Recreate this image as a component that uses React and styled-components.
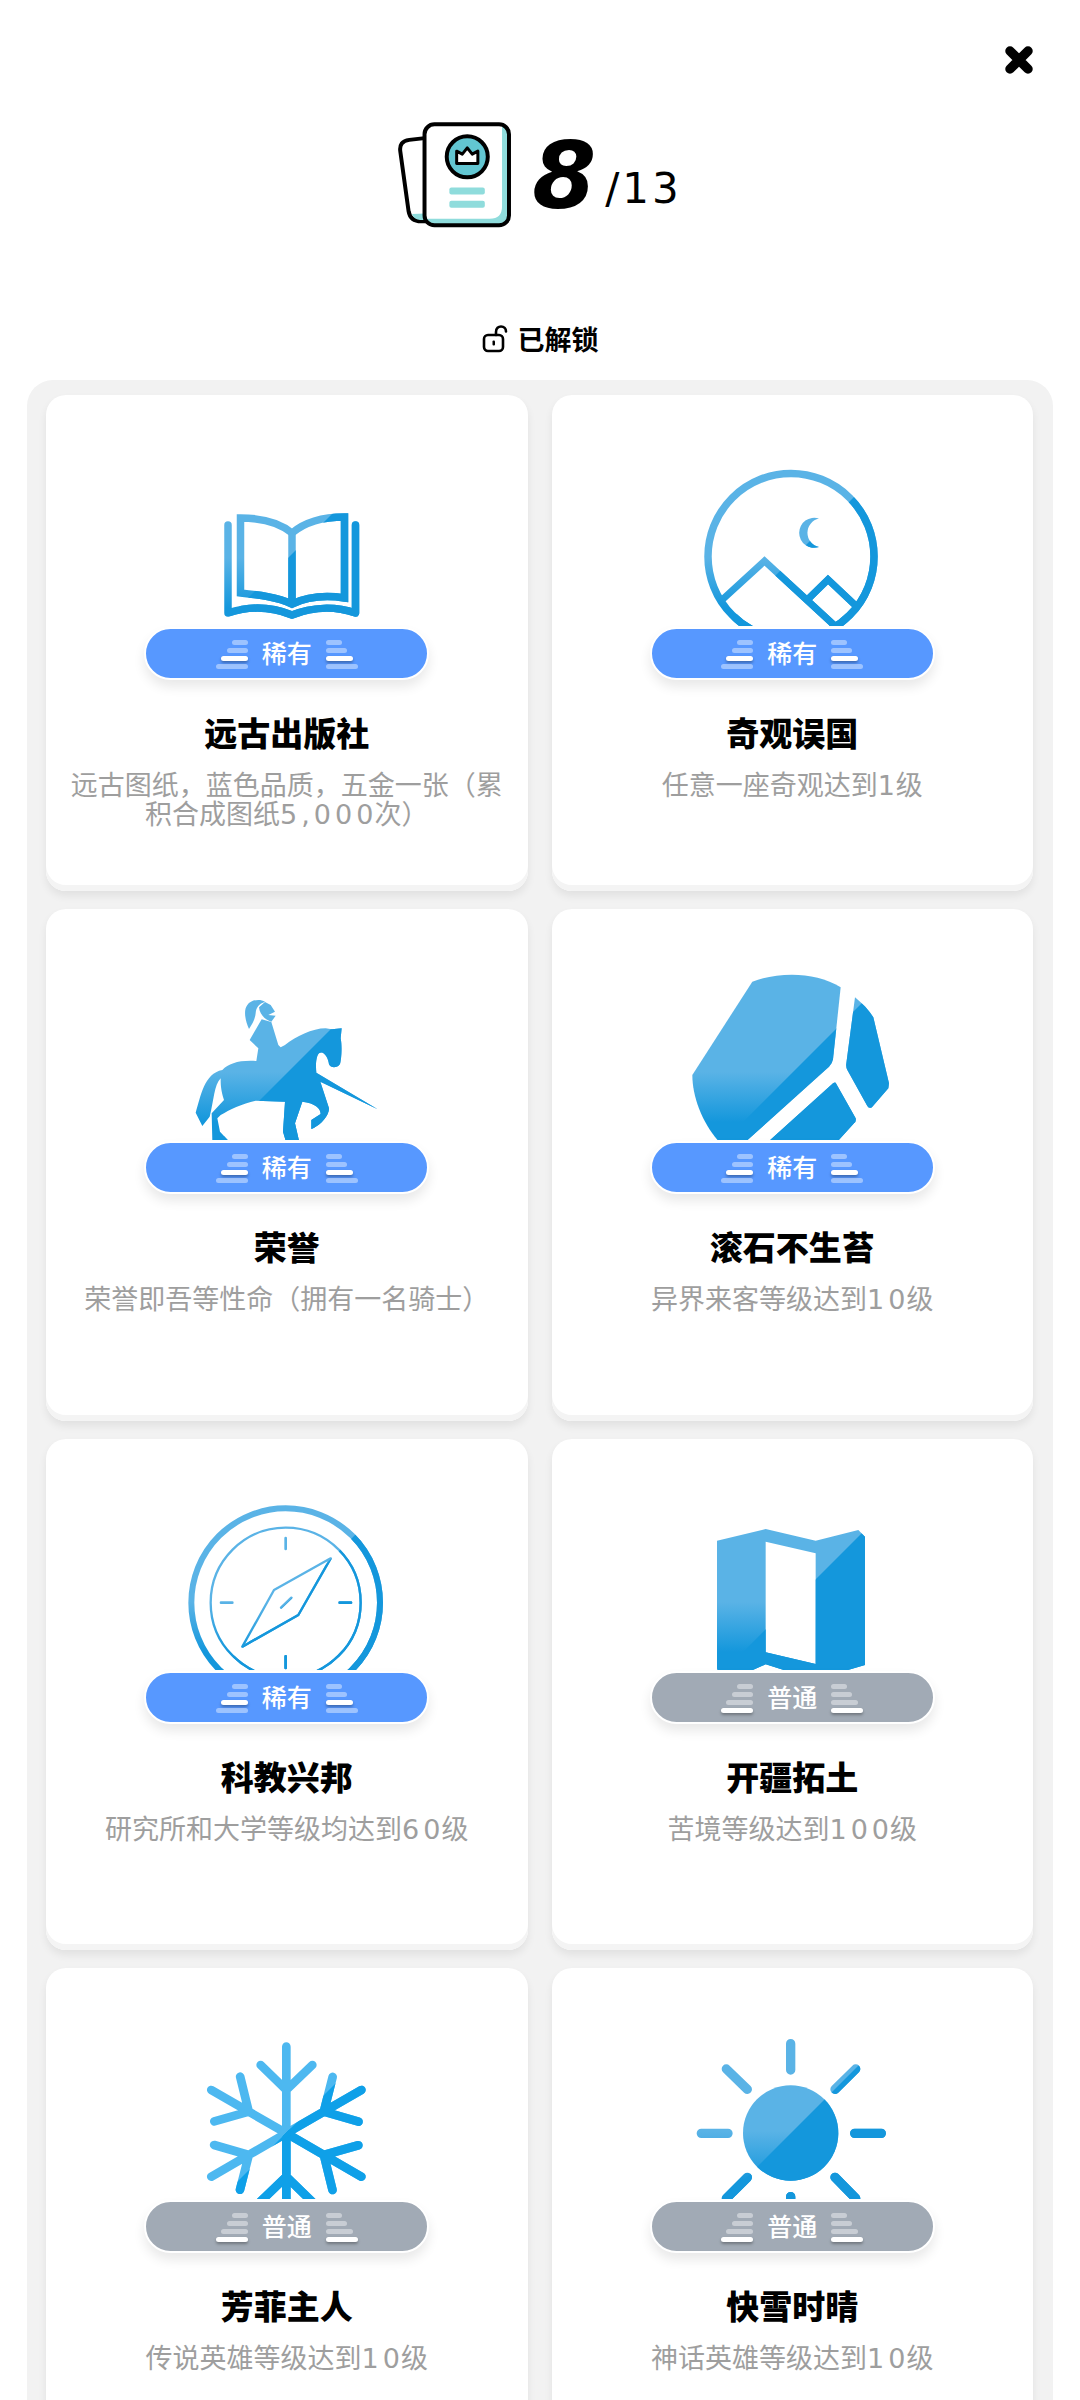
import React from "react";
import styled, { createGlobalStyle } from "styled-components";

const Global = createGlobalStyle`
  html, body { margin: 0; padding: 0; background: #fff; }
  body { font-family: "Noto Sans CJK SC", "Noto Sans", sans-serif; }
`;

const Page = styled.div`
  width: 1080px;
  height: 2400px;
  overflow: hidden;
  background: #fff;
`;
const CloseRow = styled.div`
  display: flex;
  justify-content: flex-end;
  padding: 46px 47px 0 0;
`;
const CountRow = styled.div`
  display: flex;
  justify-content: center;
  align-items: flex-start;
  height: 106px;
  margin-top: 48px;
`;
const CountBig = styled.span`
  font-family: "DejaVu Sans", sans-serif;
  font-weight: 700;
  font-style: italic;
  font-size: 92px;
  line-height: 106px;
  color: #000;
  margin-left: 20px;
  margin-top: 2px;
  width: 66px;
`;
const CountTotal = styled.span`
  font-family: "DejaVu Sans", sans-serif;
  font-size: 42px;
  line-height: 42px;
  letter-spacing: 3px;
  color: #000;
  margin-top: 46px;
  margin-left: 7px;
`;
const UnlockRow = styled.div`
  display: flex;
  justify-content: center;
  align-items: center;
  gap: 10px;
  height: 30px;
  margin-top: 96px;
`;
const UnlockText = styled.span`
  font-size: 27px;
  font-weight: 700;
  line-height: 30px;
  color: #000;
`;
const Panel = styled.section`
  margin: 26px 27px 0;
  padding: 15px 20px 40px 19px;
  background: #f2f2f2;
  border-radius: 26px 26px 0 0;
`;
const Grid = styled.div`
  display: grid;
  grid-template-columns: 1fr 1fr;
  gap: 18px 24px;
`;
const Card = styled.article`
  height: ${(p) => p.$h}px;
  box-sizing: border-box;
  padding-top: 63px;
  display: flex;
  flex-direction: column;
  align-items: center;
  background: #fff;
  border-radius: 20px;
  box-shadow: inset 0 -6px 0 #f4f4f4, 0 5px 9px rgba(0, 0, 0, 0.07);
`;
const IconClip = styled.div`
  width: 200px;
  height: 168px;
  overflow: hidden;
  flex: none;
`;
const IconSvg = styled.svg`
  display: block;
  width: 200px;
  height: 200px;
`;
const Badge = styled.div`
  flex: none;
  box-sizing: border-box;
  width: 285px;
  height: 53px;
  margin-top: 1px;
  display: flex;
  justify-content: center;
  align-items: center;
  gap: 14px;
  border: 2px solid #fff;
  border-radius: 27px;
  background: ${(p) => (p.$rare ? "#5798ff" : "#a1aab5")};
  box-shadow: 0 7px 12px rgba(0, 0, 0, 0.09);
`;
const BadgeLabel = styled.span`
  font-size: 25px;
  font-weight: 500;
  line-height: 1;
  color: #fff;
  margin-top: -3px;
`;
const Stack = styled.div`
  width: 32px;
  display: flex;
  flex-direction: column;
  gap: 3px;
  margin-top: 2px;
  align-items: ${(p) => (p.$right ? "flex-start" : "flex-end")};
`;
const Bar = styled.i`
  display: block;
  height: 5px;
  width: ${(p) => p.$w}px;
  border-radius: 3px;
  background: ${(p) => (p.$on ? "#fff" : "rgba(255,255,255,0.42)")};
  box-shadow: ${(p) => (p.$on ? "0 2px 3px rgba(0,0,0,0.3)" : "none")};
`;
const Title = styled.h3`
  margin: 32px 0 0;
  font-size: 33px;
  font-weight: 900;
  line-height: 40px;
  color: #000;
`;
const Desc = styled.p`
  margin: 17px 0 0;
  width: 436px;
  font-size: 27px;
  line-height: 29px;
  font-weight: 400;
  text-align: center;
  color: #9e9e9e;
`;
const Num = styled.span`
  font-family: "DejaVu Sans", sans-serif;
  letter-spacing: 4px;
  margin-right: -3px;
`;

const Gloss = ({ id, s = 3, dx = 0, dy = 0, light = "#5ab3e6", dark = "#1497dc", draw }) => {
  const sum = s * (201 + dx + dy);
  const far = 100000;
  return (
    <IconSvg viewBox={`${dx * s} ${dy * s} ${200 * s} ${200 * s}`}>
      <defs>
        <linearGradient id={`g-${id}`} gradientUnits="userSpaceOnUse" x1="0" x2="0" y1={(100 + dy) * s} y2={(150 + dy) * s}>
          <stop offset="0" stopColor={light} />
          <stop offset="1" stopColor={dark} />
        </linearGradient>
        <clipPath id={`c-${id}`}>
          <polygon points={`${sum + far},${-far} ${sum + far},${far} ${sum - far},${far}`} />
        </clipPath>
      </defs>
      <g>{draw(`url(#g-${id})`)}</g>
      <g clipPath={`url(#c-${id})`}>{draw(dark)}</g>
    </IconSvg>
  );
};

const BookIcon = () => (
  <Gloss
    id="book"
    s={1}
    draw={(p) => (
      <g fill="none" stroke={p} strokeWidth="7.5">
        <path d="M53.5 60 C72 60 92 64 105 75 C118 64 138 59 157.5 59 V140 C138 137 120 139 105 146 C90 139 72 137 53.5 135 Z" />
        <path d="M105 75 V146" />
        <path strokeLinecap="round" strokeLinejoin="round" d="M41 67 V155 C62 148 85 149 105 157 C125 149 148 148 168.5 155 V67" />
      </g>
    )}
  />
);

const SceneIcon = () => (
  <Gloss
    id="scene"
    s={1}
    draw={(p) => (
      <g>
        <circle cx="99" cy="98.5" r="83" fill="none" stroke={p} strokeWidth="7.5" />
        <path fill={p} d="M127 60.6 A15 15 0 1 0 127 89 A14.5 14.5 0 0 1 127 60.6 Z" />
        <path fill="none" stroke={p} strokeWidth="7" d="M31 141 L72.5 103 L142 167 M115.4 141.7 L136 121.5 L163 147" />
      </g>
    )}
  />
);

const KnightIcon = () => (
  <Gloss
    id="knight"
    dx={48}
    dy={12}
    draw={(p) => (
      <g fill={p}>
        <path d="M330 207 C318 180 313 150 325 135 C335 120 362 115 378 125 C360 132 352 140 350 160 C348 178 340 192 330 207 Z" />
        <path d="M360 142 L378 126 L395 135 L408 155 L388 165 L410 167 L397 185 C380 180 362 165 360 142 Z" />
        <path d="M368 178 L397 186 L418 255 L425 262 L438 255 C470 230 520 205 560 205 L578 208 L608 205 L605 235 C610 260 607 300 603 312 C595 325 575 325 570 313 C568 295 555 270 540 280 C530 290 530 320 532 338 L716 448 L544 365 L570 445 C570 470 540 500 517 507 L517 480 L545 462 C545 445 530 430 490 425 L468 490 L480 542 L440 542 L432 515 L438 425 L350 422 C310 430 270 450 245 465 L235 475 L243 515 L268 542 L220 542 L218 460 L255 420 C245 390 245 370 245 355 C225 375 225 420 212 470 L190 498 L170 458 C185 410 195 340 250 330 C270 310 300 300 352 303 L358 265 L332 240 L368 178 Z" />
      </g>
    )}
  />
);

const RockIcon = () => (
  <Gloss
    id="rock"
    dx={53}
    dy={12}
    draw={(p) => (
      <g fill={p}>
        <path d="M340 65 C420 35 530 35 605 82 L582 298 Q580 310 570 320 L320 545 L240 545 C190 490 160 410 160 345 Z" />
        <path d="M648 112 C670 130 690 150 703 172 L750 370 L748 385 L700 440 Q692 448 685 438 L625 330 Q620 320 622 310 Z" />
        <path d="M590 368 L650 475 Q652 485 645 490 L595 545 L388 545 L582 370 Q587 366 590 368 Z" />
      </g>
    )}
  />
);

const CompassIcon = () => (
  <Gloss
    id="compass"
    dx={48}
    dy={12}
    draw={(p) => (
      <g fill="none" stroke={p}>
        <circle cx="440" cy="338" r="283" strokeWidth="18" />
        <circle cx="440" cy="338" r="225" strokeWidth="7" />
        <path strokeWidth="8" strokeLinecap="round" d="M440 144 V177 M440 499 V534 M246 338 H280 M602 338 H636" />
        <path strokeWidth="7" strokeLinejoin="round" d="M575 205 L405 300 L310 470 L478 375 Z" />
        <path strokeWidth="7" strokeLinecap="round" d="M426 353 L457 323" />
      </g>
    )}
  />
);

const MapIcon = () => (
  <Gloss
    id="map"
    dx={53}
    dy={12}
    draw={(p) => (
      <path
        fill={p}
        fillRule="evenodd"
        d="M234 152 L380 117 L530 152 L658 120 L678 140 V525 L610 545 L450 545 L380 523 L330 545 L240 545 Q234 541 234 535 Z M380 155 L530 190 V522 L380 487 Z"
      />
    )}
  />
);

const arms = [0, 60, 120, 180, 240, 300];
const SnowIcon = () => (
  <Gloss
    id="snow"
    dx={48}
    dy={11}
    light="#4db8f0"
    dark="#0fa0e8"
    draw={(p) => (
      <g fill="none" stroke={p} strokeWidth="26" strokeLinecap="round" strokeLinejoin="round">
        {arms.map((a) => (
          <path key={a} transform={`rotate(${a} 442 340)`} d="M442 340 V80 M365 135 L442 210 L520 135" />
        ))}
      </g>
    )}
  />
);

const SunIcon = () => (
  <Gloss
    id="sun"
    dx={53}
    dy={11}
    draw={(p) => (
      <g fill="none" stroke={p}>
        <circle cx="455" cy="339" r="143" fill={p} stroke="none" />
        <path
          strokeWidth="28"
          strokeLinecap="round"
          d="M455 71 V150 M455 530 V609 M187 340 H267 M647 340 H727 M262 147 L325 208 M650 147 L588 208 M325 472 L262 535 M588 472 L650 535"
        />
      </g>
    )}
  />
);

const barWidths = [16, 21, 27, 32];
const Bars = ({ right, on }) => (
  <Stack $right={right}>
    {barWidths.map((w, i) => (
      <Bar key={w} $w={w} $on={i === on} />
    ))}
  </Stack>
);

const withDigits = (text) =>
  text.split(/(\d[\d,]*)/).map((part, i) => (i % 2 ? <Num key={i}>{part}</Num> : part));

const items = [
  { Icon: BookIcon, rare: true, title: "远古出版社", desc: "远古图纸，蓝色品质，五金一张（累积合成图纸5,000次）", h: 496 },
  { Icon: SceneIcon, rare: true, title: "奇观误国", desc: "任意一座奇观达到1级", h: 496 },
  { Icon: KnightIcon, rare: true, title: "荣誉", desc: "荣誉即吾等性命（拥有一名骑士）", h: 512 },
  { Icon: RockIcon, rare: true, title: "滚石不生苔", desc: "异界来客等级达到10级", h: 512 },
  { Icon: CompassIcon, rare: true, title: "科教兴邦", desc: "研究所和大学等级均达到60级", h: 511 },
  { Icon: MapIcon, rare: false, title: "开疆拓土", desc: "苦境等级达到100级", h: 511 },
  { Icon: SnowIcon, rare: false, title: "芳菲主人", desc: "传说英雄等级达到10级", h: 511 },
  { Icon: SunIcon, rare: false, title: "快雪时晴", desc: "神话英雄等级达到10级", h: 511 },
];

const CloseIcon = () => (
  <svg width="28" height="28" viewBox="0 0 28 28">
    <path d="M5 5 L23 23 M23 5 L5 23" stroke="#000" strokeWidth="9.5" strokeLinecap="round" />
  </svg>
);

const AlbumIcon = () => (
  <svg width="114" height="106" viewBox="118 120 344 320">
    <path d="M205 168 L152 174 Q120 178 125 210 L150 390 Q155 420 188 420 L215 420 Z" fill="#fff" stroke="#000" strokeWidth="12" strokeLinejoin="round" />
    <path d="M160 398 L200 396 L200 416 L185 416 Q168 416 160 398 Z" fill="#8fdcdc" />
    <rect x="198" y="127" width="255" height="305" rx="30" fill="#fff" />
    <path d="M432 130 Q450 135 450 160 V400 Q450 430 420 430 H230 Q205 430 205 412 H395 Q432 412 432 375 Z" fill="#8fdcdc" />
    <rect x="198" y="127" width="255" height="305" rx="30" fill="none" stroke="#000" strokeWidth="12" />
    <circle cx="327" cy="225" r="62" fill="#62c6d2" stroke="#000" strokeWidth="12" />
    <path d="M295 245 L295 208 L312 217 L327 198 L342 217 L359 208 L359 245 Z" fill="#fff" stroke="#000" strokeWidth="9" strokeLinejoin="round" />
    <rect x="273" y="318" width="107" height="21" rx="6" fill="#8fdcdc" />
    <rect x="273" y="358" width="107" height="21" rx="6" fill="#8fdcdc" />
  </svg>
);

const LockIcon = () => (
  <svg width="26" height="28" viewBox="0 0 26 28">
    <rect x="2" y="10" width="19" height="16" rx="4" fill="none" stroke="#000" strokeWidth="2.6" />
    <path d="M14 10 V7 C14 3 16.5 1.5 19 1.5 C22 1.5 24 3.5 24 6.5" fill="none" stroke="#000" strokeWidth="2.6" strokeLinecap="round" />
    <rect x="10.5" y="15.5" width="2.5" height="5" rx="1" fill="#000" />
  </svg>
);

export default function App() {
  return (
    <Page>
      <Global />
      <CloseRow>
        <CloseIcon />
      </CloseRow>
      <CountRow>
        <AlbumIcon />
        <CountBig>8</CountBig>
        <CountTotal>/13</CountTotal>
      </CountRow>
      <UnlockRow>
        <LockIcon />
        <UnlockText>已解锁</UnlockText>
      </UnlockRow>
      <Panel>
        <Grid>
          {items.map(({ Icon, rare, title, desc, h }) => (
            <Card key={title} $h={h}>
              <IconClip>
                <Icon />
              </IconClip>
              <Badge $rare={rare}>
                <Bars on={rare ? 2 : 3} />
                <BadgeLabel>{rare ? "稀有" : "普通"}</BadgeLabel>
                <Bars right on={rare ? 2 : 3} />
              </Badge>
              <Title>{title}</Title>
              <Desc>{withDigits(desc)}</Desc>
            </Card>
          ))}
        </Grid>
      </Panel>
    </Page>
  );
}
